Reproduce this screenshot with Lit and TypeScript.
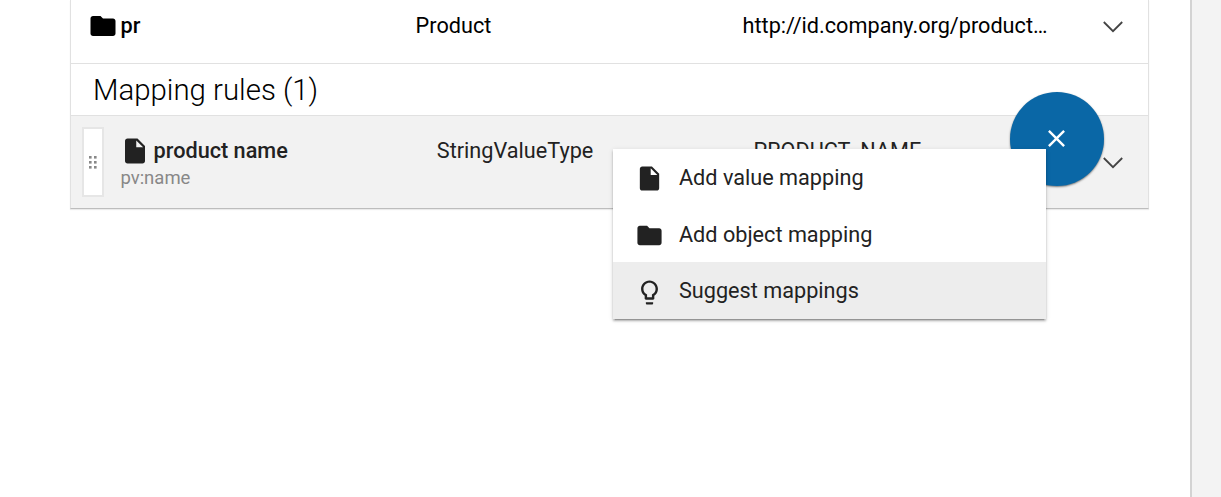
import { LitElement, html, css, svg } from "lit";
import { customElement, property } from "lit/decorators.js";

const ICONS: Record<string, string> = {
  file: "M6 2c-1.1 0-1.99.9-1.99 2L4 20c0 1.1.89 2 1.99 2H18c1.1 0 2-.9 2-2V8l-6-6H6zm7 7V3.5L18.5 9H13z",
  folder: "M10 4H4c-1.1 0-1.99.9-1.99 2L2 18c0 1.1.9 2 2 2h16c1.1 0 2-.9 2-2V8c0-1.1-.9-2-2-2h-8l-2-2z",
  bulb: "M9 21c0 .55.45 1 1 1h4c.55 0 1-.45 1-1v-1H9v1zm3-19C8.14 2 5 5.14 5 9c0 2.38 1.19 4.47 3 5.74V17c0 .55.45 1 1 1h6c.55 0 1-.45 1-1v-2.26c1.81-1.27 3-3.36 3-5.74 0-3.86-3.14-7-7-7zm2.85 11.1l-.85.6V16h-4v-2.3l-.85-.6C7.8 12.16 7 10.63 7 9c0-2.76 2.24-5 5-5s5 2.24 5 5c0 1.63-.8 3.16-2.15 4.1z",
  close: "M19 6.41L17.59 5 12 10.59 6.41 5 5 6.41 10.59 12 5 17.59 6.41 19 12 13.41 17.59 19 19 17.59 13.41 12z",
};

@customElement("ui-icon")
export class UiIcon extends LitElement {
  @property() name = "file";
  static styles = css`
    :host { display: block; width: 30px; height: 30px; flex: none; }
    .glyph { display: block; width: 100%; height: 100%; fill: currentColor; }
  `;
  render() {
    return html`<svg class="glyph" viewBox="0 0 24 24">${svg`<path d=${ICONS[this.name]}></path>`}</svg>`;
  }
}

@customElement("ui-chevron")
export class UiChevron extends LitElement {
  static styles = css`
    :host { display: block; width: 20px; height: 12px; flex: none; }
    .glyph { display: block; fill: none; stroke: #444; stroke-width: 1.8; }
  `;
  render() {
    return html`<svg class="glyph" width="20" height="12" viewBox="0 0 20 12"><path d="M.8 1L10 10.2 19.2 1"></path></svg>`;
  }
}

@customElement("app-root")
export class AppRoot extends LitElement {
  static styles = css`
    :host {
      display: flex;
      height: 497px;
      overflow: hidden;
      background: #f3f3f3;
      font: 400 21.67px/28px Roboto, sans-serif;
      color: #000;
    }
    * { box-sizing: border-box; }
    .page {
      width: 1192px;
      padding-left: 70px;
      background: #fff;
      border-right: 2px solid #d3d3d3;
    }
    .card {
      position: relative;
      width: 1079px;
      height: 209px;
      border: solid #e1e1e1;
      border-width: 0 1px 1px;
      border-bottom-color: #bdbdbd;
      box-shadow: 0 1px 1px rgba(0, 0, 0, 0.08);
    }
    .row { display: grid; align-items: start; }
    .parent {
      height: 64px;
      grid-template-columns: 328px 327px 360.4px 20px;
      padding: 11px 0 0 16.6px;
      border-bottom: 1px solid #e1e1e1;
    }
    .cell { padding-top: 1px; white-space: nowrap; }
    .name { display: flex; gap: 3px; font-weight: 500; }
    .name span { padding-top: 1px; }
    .parent ui-chevron { margin-top: 10px; }
    .heading {
      height: 52px;
      padding: 8px 0 0 22px;
      font-size: 29.4px;
      line-height: 36px;
      font-weight: 300;
      border-bottom: 1px solid #e1e1e1;
    }
    .rule {
      height: 92px;
      grid-template-columns: 38.4px 316.4px 316.8px 349.4px 20px;
      padding: 11px 0 0 11px;
      background: #f2f2f2;
      color: #222;
    }
    .handle {
      display: flex;
      align-items: center;
      justify-content: center;
      width: 22px;
      height: 70px;
      background: #fff;
      border: 2px solid #e6e6e6;
    }
    .handle svg { display: block; fill: #888; }
    .label { padding: 9px 0 0 0; }
    .label .name { gap: 4px; }
    .label ui-icon { margin-left: -0.8px; }
    .sub { font-size: 18.5px; line-height: 22px; color: #888; margin-top: 1px; }
    .rule .cell { padding-top: 10px; }
    .rule ui-chevron { margin-top: 30px; }
    .fab {
      position: absolute;
      left: 939px;
      top: 92px;
      display: grid;
      place-items: center;
      width: 94px;
      height: 94px;
      border: 0;
      padding: 0 1px 1px 0;
      border-radius: 50%;
      background: #0a67a6;
      color: #fff;
      box-shadow: 0 1px 2px rgba(0, 0, 0, 0.5);
    }
    .menu {
      position: absolute;
      left: 541.6px;
      top: 149px;
      width: 433.4px;
      height: 170px;
      background: #fff;
      color: #222;
      box-shadow: 0 2px 2px rgba(0, 0, 0, 0.24), 0 3px 1px -2px rgba(0, 0, 0, 0.2), 0 1px 5px rgba(0, 0, 0, 0.12);
    }
    .item {
      display: flex;
      align-items: center;
      gap: 15px;
      height: 56.66px;
      padding-left: 22.4px;
    }
    .item ui-icon, .fab ui-icon { width: 29px; height: 29px; }
    .item ui-icon { margin-top: 2.8px; }
    .item span { margin-top: 1.6px; }
    .active { background: #ededed; }
  `;

  private items = [
    { icon: "file", text: "Add value mapping" },
    { icon: "folder", text: "Add object mapping" },
    { icon: "bulb", text: "Suggest mappings", active: true },
  ];

  render() {
    return html`
      <main class="page">
        <section class="card">
          <div class="row parent">
            <div class="name"><ui-icon name="folder"></ui-icon><span>pr</span></div>
            <div class="cell">Product</div>
            <div class="cell">http://id.company.org/product…</div>
            <ui-chevron></ui-chevron>
          </div>
          <div class="heading">Mapping rules (1)</div>
          <div class="row rule">
            <div class="handle">
              <svg width="8" height="13" viewBox="0 0 8 13">
                ${[0, 5, 10].map((y) => [0, 5].map((x) => svg`<rect x=${x} y=${y} width="2.6" height="2.6"></rect>`))}
              </svg>
            </div>
            <div class="label">
              <div class="name"><ui-icon name="file"></ui-icon><span>product name</span></div>
              <div class="sub">pv:name</div>
            </div>
            <div class="cell">StringValueType</div>
            <div class="cell">PRODUCT_NAME</div>
            <ui-chevron></ui-chevron>
          </div>
          <button class="fab" aria-label="Close"><ui-icon name="close"></ui-icon></button>
          <div class="menu">
            ${this.items.map(
              (i) => html`<div class="item ${i.active ? "active" : ""}"><ui-icon name=${i.icon}></ui-icon><span>${i.text}</span></div>`
            )}
          </div>
        </section>
      </main>
    `;
  }
}
